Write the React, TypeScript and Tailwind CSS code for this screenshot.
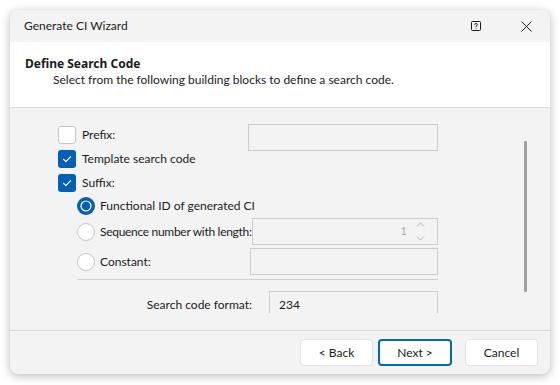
import React from 'react';

const font = { fontFamily: 'Lato, "Liberation Sans", sans-serif' };
const boldFont = { fontFamily: '"Noto Sans", "Liberation Sans", sans-serif' };

function CheckBox({ checked }: { checked?: boolean }) {
  if (!checked) {
    return <div className="w-[18px] h-[18px] shrink-0 rounded-[3px] border border-[#c6c6c6] bg-white" />;
  }
  return (
    <div className="w-[18px] h-[18px] shrink-0 rounded-[3px] bg-[#005fb8] flex items-center justify-center">
      <svg width="12" height="12" viewBox="0 0 12 12">
        <path d="M2.5 6.3 L4.9 8.6 L9.6 3.6" fill="none" stroke="white" strokeWidth="1.2" strokeLinecap="round" strokeLinejoin="round" />
      </svg>
    </div>
  );
}

function Radio({ checked }: { checked?: boolean }) {
  return (
    <svg width="18" height="18" viewBox="0 0 18 18" className="shrink-0">
      {checked ? (
        <>
          <circle cx="9" cy="9" r="9" fill="#005fb8" />
          <circle cx="9" cy="9" r="5.6" fill="white" />
          <circle cx="9" cy="9" r="4.4" fill="#005fb8" />
        </>
      ) : (
        <circle cx="9" cy="9" r="8.5" fill="white" stroke="#c6c6c6" />
      )}
    </svg>
  );
}

function Field({ className, children }: { className: string; children?: React.ReactNode }) {
  return <div className={`h-[27px] border border-[#cccccc] bg-[#f3f3f3] ${className}`}>{children}</div>;
}

function Button({ label, primary }: { label: string; primary?: boolean }) {
  return (
    <div
      className={`h-[27px] rounded-[4px] bg-white flex items-center justify-center text-[12px] text-[#1b1b1b] ${
        primary ? 'w-[74px] border-2 border-[#0067c0]' : 'w-[73px] border border-[#e3e3e3]'
      }`}
    >
      {label}
    </div>
  );
}

export default function App() {
  return (
    <div className="w-[560px] h-[385px] bg-white p-[10px] pb-[11px]" style={font}>
      <div className="w-[540px] h-[364px] rounded-[8px] overflow-hidden bg-[#f3f3f3] shadow-[0_2px_10px_rgba(0,0,0,0.28)] flex flex-col text-[12px] text-[#1b1b1b] whitespace-nowrap">
        {/* title bar */}
        <div className="h-[32px] flex items-center pl-[14px] pr-[18px] shrink-0">
          <span className="flex-1">Generate CI Wizard</span>
          <svg width="10" height="10" viewBox="0 0 10 10" className="mr-[40px]">
            <rect x="0.5" y="0.5" width="9" height="9" rx="1" fill="none" stroke="#1b1b1b" />
            <path d="M3.6 3.8 Q3.6 2.5 5 2.5 Q6.4 2.5 6.4 3.7 Q6.4 4.6 5 5.1 L5 6" fill="none" stroke="#1b1b1b" strokeWidth="0.9" />
            <rect x="4.55" y="6.8" width="0.9" height="0.9" fill="#1b1b1b" />
          </svg>
          <svg width="11" height="11" viewBox="0 0 11 11">
            <path d="M0.5 0.5 L10.5 10.5 M10.5 0.5 L0.5 10.5" stroke="#1b1b1b" strokeWidth="1" />
          </svg>
        </div>

        {/* header */}
        <div className="h-[66px] bg-white border-b border-[#d9d9d9] shrink-0 pt-[14px] leading-[16px]">
          <div className="pl-[15px] font-bold" style={boldFont}>Define Search Code</div>
          <div className="pl-[43px]">Select from the following building blocks to define a search code.</div>
        </div>

        {/* content */}
        <div className="h-[223px] border-b border-[#d9d9d9] shrink-0 flex">
          <div className="w-[514px] h-[205px] overflow-hidden pt-[15px] flex flex-col">
            <div className="h-[24px] flex items-center pl-[48px] shrink-0">
              <div className="w-[190px] flex items-center gap-[6px]">
                <CheckBox />
                <span>Prefix:</span>
              </div>
              <Field className="w-[190px] self-start mt-[1px]" />
            </div>
            <div className="h-[24px] flex items-center gap-[6px] pl-[48px] shrink-0">
              <CheckBox checked />
              <span>Template search code</span>
            </div>
            <div className="h-[24px] flex items-center gap-[6px] pl-[48px] shrink-0">
              <CheckBox checked />
              <span>Suffix:</span>
            </div>
            <div className="h-[22px] flex items-center gap-[5px] pl-[67px] shrink-0">
              <Radio checked />
              <span>Functional ID of generated CI</span>
            </div>
            <div className="h-[27px] mt-[1px] flex items-center pl-[67px] shrink-0">
              <div className="w-[175px] shrink-0 flex items-center gap-[5px]">
                <Radio />
                <span className="tracking-[-0.3px]">Sequence number with length:</span>
              </div>
              <Field className="w-[186px] flex items-center justify-end pr-[12px]">
                <span className="text-[#a8a8a8] text-[11px] mr-[9px]">1</span>
                <svg width="9" height="21" viewBox="0 0 9 21">
                  <path d="M1 5.5 L4.5 2 L8 5.5" fill="none" stroke="#b5b5b5" strokeWidth="1" />
                  <path d="M1 15.5 L4.5 19 L8 15.5" fill="none" stroke="#b5b5b5" strokeWidth="1" />
                </svg>
              </Field>
            </div>
            <div className="h-[27px] mt-[3px] flex items-center pl-[67px] shrink-0">
              <div className="w-[173px] flex items-center gap-[5px]">
                <Radio />
                <span>Constant:</span>
              </div>
              <Field className="w-[188px]" />
            </div>
            <div className="h-px mt-[4px] ml-[67px] w-[361px] bg-[#d0d0d0] shrink-0" />
            <div className="h-[27px] mt-[11px] flex items-center shrink-0">
              <div className="w-[242px] text-right">Search code format:</div>
              <Field className="w-[169px] ml-[17px] flex items-center pl-[9px]">
                <span>234</span>
              </Field>
            </div>
          </div>
          <div className="w-[3px] h-[151px] mt-[33px] bg-[#a0a0a0] rounded-[1px]" />
        </div>

        {/* footer */}
        <div className="flex-1 flex items-start justify-end pt-[8px] pr-[12px]">
          <Button label="< Back" />
          <div className="w-[5px]" />
          <Button label="Next >" primary />
          <div className="w-[13px]" />
          <Button label="Cancel" />
        </div>
      </div>
    </div>
  );
}
